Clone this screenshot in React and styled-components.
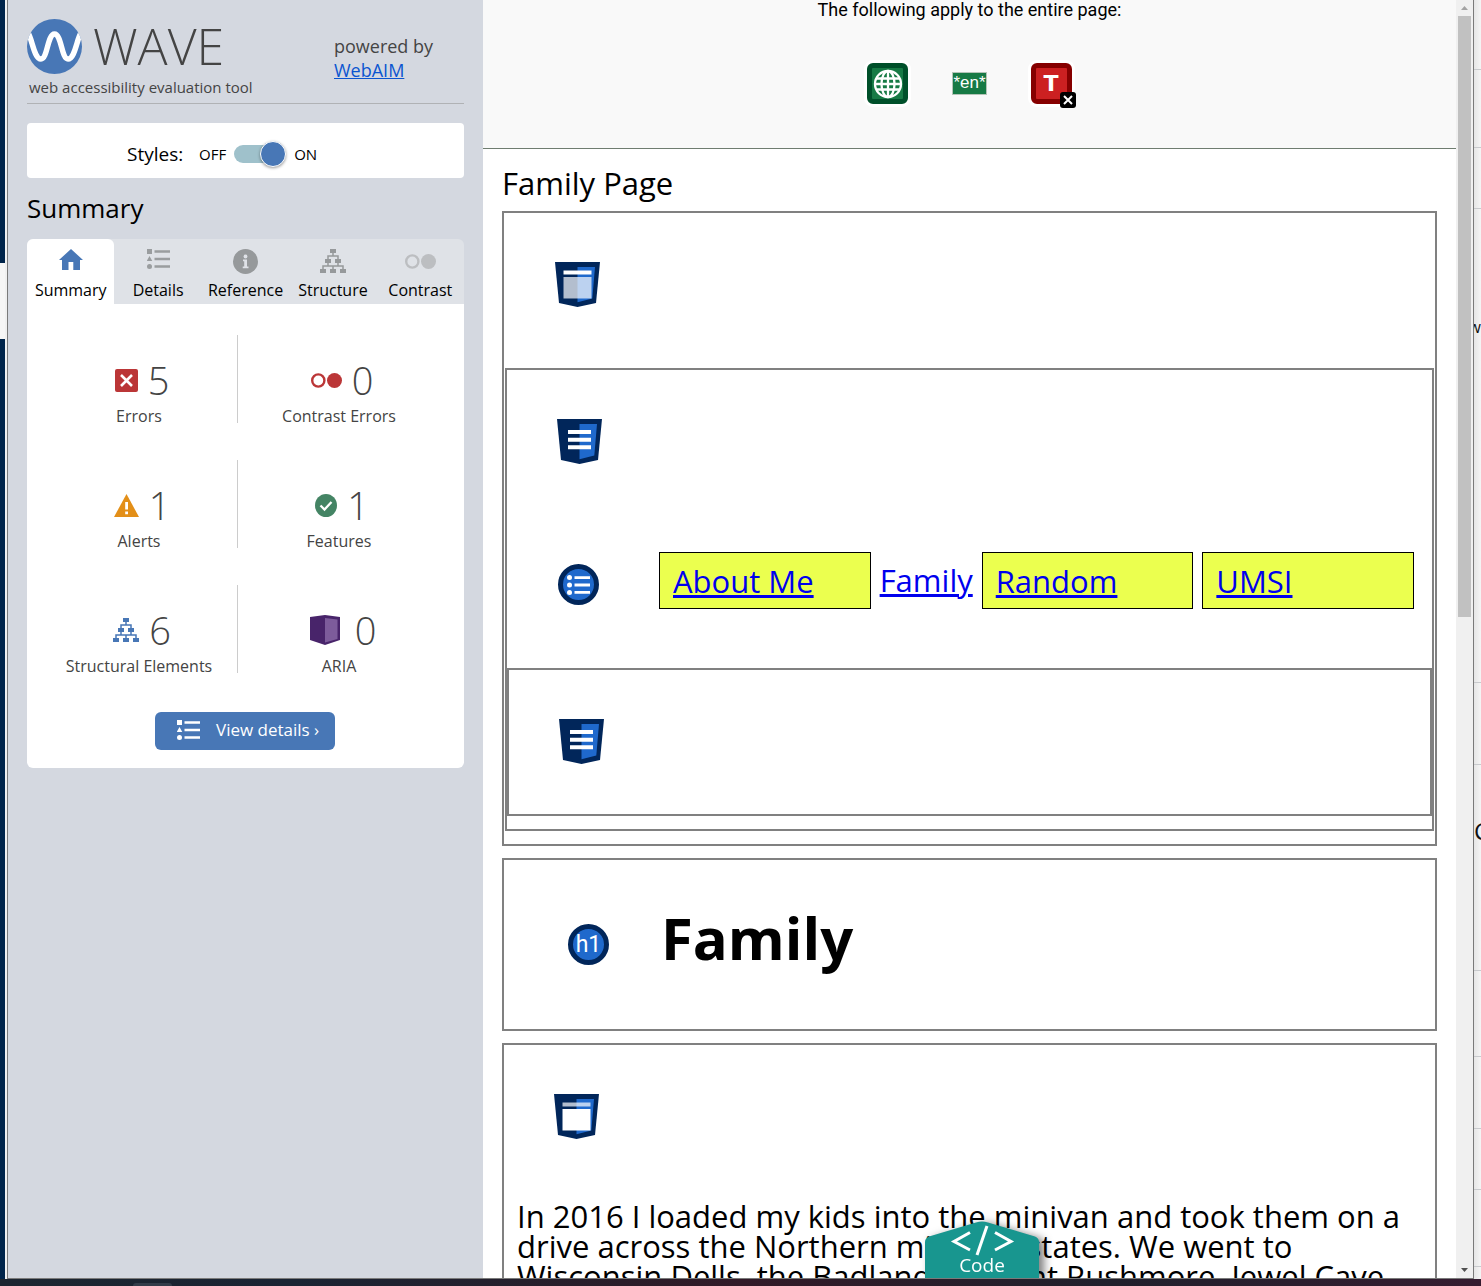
import React, { useState } from "react";
import styled, { createGlobalStyle } from "styled-components";

const uiFont = `"Open Sans", "Noto Sans", sans-serif`;
const pageFont = `"Open Sans", "Noto Sans", sans-serif`;

const GlobalStyle = createGlobalStyle`
  *, *::before, *::after { box-sizing: border-box; }
  body { margin: 0; background: #fff; }
  h1, h2, p, ul { margin: 0; padding: 0; font-weight: 400; }
  svg { display: block; flex: none; }
`;

/* ---------- desktop and window frame ---------- */

const Desktop = styled.div`
  display: flex;
  flex-direction: column;
  height: 100vh;
  overflow: hidden;
`;

const Stage = styled.div`
  flex: 1;
  min-height: 0;
  display: flex;
`;

const BackLeft = styled.div`
  flex: none;
  width: 7px;
  border-right: 2px solid #f0f0f0;
  background: linear-gradient(#00244a 263px, #f6f6f6 263px, #f6f6f6 339px, #00244a 339px);
`;

const BackRight = styled.div`
  flex: none;
  width: 7px;
  overflow: hidden;
  background: linear-gradient(90deg, #e6e6e6, #f5f5f5);
`;

const BackCell = styled.div`
  height: ${(p) => p.$height}px;
  display: flex;
  align-items: center;
  justify-content: ${(p) => (p.$end ? "flex-end" : "flex-start")};
  border-bottom: ${(p) => (p.$open ? "0" : "1px solid #c8cacd")};
  font: 400 ${(p) => p.$size || 16}px ${uiFont};
  color: #111;
`;

const Window = styled.div`
  flex: 1;
  min-width: 0;
  display: flex;
  border: 1px solid #7a7a7a;
  border-top: 0;
  background: #fff;
  overflow: hidden;
`;

const Taskbar = styled.div`
  flex: none;
  height: 7px;
  padding: 4px 0 0 133px;
  background: linear-gradient(90deg, #1c2530, #1a2433 20%, #2a1d29 42%, #321a28 50%, #20202c 75%, #351c30);
`;

const TaskItem = styled.div`
  width: 39px;
  height: 3px;
  border-radius: 3px 3px 0 0;
  background: #323c49;
`;

/* ---------- sidebar ---------- */

const Sidebar = styled.aside`
  flex: none;
  width: 475px;
  padding: 18px 19px;
  background: #d4d8e0;
  font-family: ${uiFont};
  color: #000;
`;

const Header = styled.header`
  display: grid;
  grid-template-columns: 307px 1fr;
  height: 86px;
  margin-bottom: 19px;
  border-bottom: 1px solid #b0b2b5;
  color: #444;
`;

const Brand = styled.div`
  display: flex;
  align-items: center;
  gap: 11px;
  height: 56px;
`;

const Wordmark = styled.span`
  font-size: 50px;
  line-height: 56px;
  font-weight: 300;
`;

const Tagline = styled.p`
  padding-left: 2px;
  font-size: 15px;
  line-height: 26px;
`;

const Powered = styled.p`
  padding-top: 16px;
  font-size: 18px;
  line-height: 24px;
`;

const PoweredLink = styled.a`
  display: block;
  color: #0b55d0;
`;

const StylesPanel = styled.div`
  display: flex;
  align-items: center;
  height: 55px;
  padding: 6px 0 0 100px;
  border-radius: 4px;
  background: #fff;
`;

const SwitchTitle = styled.label`
  width: 72px;
  font-size: 19px;
`;

const SwitchState = styled.span`
  font-size: 15px;
`;

const Switch = styled.input`
  appearance: none;
  position: relative;
  width: 52px;
  height: 26px;
  margin: 0 8px;
  display: flex;
  align-items: center;
  cursor: pointer;

  &::before {
    content: "";
    width: 48px;
    height: 18px;
    border-radius: 9px;
    background: #9fc1cb;
  }

  &::after {
    content: "";
    position: absolute;
    top: 0;
    left: ${(p) => (p.checked ? "26px" : "0")};
    width: 26px;
    height: 26px;
    border: 1px solid #fff;
    border-radius: 50%;
    background: #4877b6;
    box-shadow: 0 1px 3px rgba(0, 0, 0, 0.4);
  }
`;

const SectionTitle = styled.h2`
  margin: 12px 0;
  font-size: 26px;
  line-height: 37px;
`;

const Tabs = styled.div`
  display: flex;
  height: 65px;
  border-radius: 6px 6px 0 0;
  background: #dfe2e7;
`;

const Tab = styled.button`
  flex: 1 1 0;
  min-width: 0;
  display: flex;
  flex-direction: column;
  align-items: center;
  padding: 10px 0 0;
  border: 0;
  border-radius: 6px 6px 0 0;
  background: ${(p) => (p.$active ? "#fff" : "transparent")};
  color: #000;
  font: 400 16px/24px ${uiFont};
  white-space: nowrap;
  cursor: pointer;
`;

const TabIcon = styled.span`
  display: flex;
  align-items: ${(p) => (p.$middle ? "center" : "flex-start")};
  height: 25px;
  margin-bottom: 4px;
  color: ${(p) => p.$color};
`;

const SummaryPanel = styled.section`
  padding: 31px 24px 18px 11px;
  border-radius: 0 0 6px 6px;
  background: #fff;
  color: #444;
`;

const StatGrid = styled.div`
  display: grid;
  grid-template-columns: 200fr 202fr;
  row-gap: 37px;
`;

const Stat = styled.div`
  height: 88px;
  display: flex;
  flex-direction: column;
  align-items: center;
  padding-top: 25px;

  &:nth-child(odd) {
    padding-left: 3px;
    border-right: 1px solid #ccc;
  }
`;

const StatTop = styled.div`
  display: flex;
  align-items: center;
  gap: 10px;
  padding-left: 6px;
  height: 40px;
`;

const StatCount = styled.span`
  font-size: 38px;
  line-height: 40px;
  font-weight: 350;
`;

const StatLabel = styled.span`
  font-size: 16px;
  line-height: 32px;
`;

const ViewDetails = styled.button`
  display: flex;
  align-items: center;
  gap: 16px;
  height: 38px;
  margin: 39px 0 0 117px;
  padding: 0 16px 2px 22px;
  border: 0;
  border-radius: 6px;
  background: #4877b6;
  color: #fff;
  font: 400 17px/24px ${uiFont};
  cursor: pointer;
`;

/* ---------- evaluated page ---------- */

const Viewer = styled.div`
  position: relative;
  flex: 1;
  min-width: 0;
  display: flex;
`;

const Page = styled.main`
  flex: 1;
  min-width: 0;
  height: 100%;
  overflow: hidden;
  font-family: ${pageFont};
  color: #000;
`;

const PageNotice = styled.div`
  display: flex;
  flex-direction: column;
  align-items: center;
  gap: 44px;
  height: 149px;
  border-bottom: 1px solid #6f7d70;
  background: #f9f9f9;
`;

const NoticeText = styled.p`
  font: 400 18px/19px Roboto, "Liberation Sans", sans-serif;
`;

const NoticeIcons = styled.div`
  display: flex;
  align-items: center;
  gap: 44px;
`;

const NoticeBadge = styled.span`
  position: relative;
  display: flex;
  align-items: center;
  justify-content: center;
  width: 41px;
  height: 41px;
  border: 5px solid ${(p) => p.$edge};
  border-radius: 6px;
  background: ${(p) => p.$fill};
  box-shadow: 0 0 0 3px #fff;
  color: #fff;
  font: 700 22px/24px "DejaVu Sans", sans-serif;
`;

const BadgeCorner = styled.span`
  position: absolute;
  right: -9px;
  bottom: -9px;
`;

const LangTag = styled.span`
  height: 23px;
  border: 1px solid #b5c4b8;
  background: #177a45;
  color: #fff;
  font: 400 17px/19px "Liberation Sans", Arial, sans-serif;
`;

const PageBody = styled.div`
  padding: 14px 19px 0;
`;

const PageTitle = styled.p`
  font-size: 31px;
  line-height: 40px;
  margin-bottom: 8px;
`;

const Outline = styled.section`
  margin-bottom: ${(p) => (p.$nested ? 0 : 12)}px;
  padding: ${(p) => p.$pad || "0"};
  border: 2px solid #808080;
`;

const Marker = styled.div`
  padding: 49px 50px ${(p) => (p.$short ? 50 : 61)}px;
`;

const NavRow = styled.nav`
  display: flex;
  align-items: flex-start;
  padding: 27px 18px 59px 51px;
`;

const RoundMarker = styled.span`
  flex: none;
  display: flex;
  align-items: center;
  justify-content: center;
  width: 41px;
  height: 41px;
  margin: 12px 60px 0 0;
  border: 5px solid #01265a;
  border-radius: 50%;
  background: #1f69cc;
  color: #fff;
  font: 400 23px/30px Roboto, sans-serif;
`;

const NavList = styled.ul`
  flex: 1;
  display: flex;
  gap: 9px;
  list-style: none;
`;

const NavItem = styled.li`
  flex: ${(p) => (p.$boxed ? "1 1 0" : "none")};
  height: 57px;
  padding: ${(p) => (p.$boxed ? "0 13px" : "0")};
  border: ${(p) => (p.$boxed ? "1px solid #000" : "0")};
  background: ${(p) => (p.$boxed ? "#ebff4f" : "transparent")};
  font-size: 31px;
  line-height: 57px;
`;

const NavLink = styled.a`
  color: #0000ee;
  text-decoration-thickness: 3px;
`;

const HeadingRow = styled.div`
  display: flex;
  align-items: flex-start;
  height: 169px;
  padding: 42px 64px 0;
`;

const HeadingMark = styled(RoundMarker)`
  margin: 22px 52px 0 0;
`;

const Heading = styled.h1`
  font-size: 58px;
  line-height: 72px;
  font-weight: 700;
`;

const Story = styled.p`
  padding: 1px 13px 0;
  font-size: 31px;
  line-height: 30px;
  white-space: nowrap;
`;

const Scrollbar = styled.div`
  flex: none;
  width: 17px;
  display: flex;
  flex-direction: column;
  align-items: center;
  justify-content: space-between;
  background: #f0f0f0;
`;

const ScrollArrow = styled.div`
  height: 16px;
  display: flex;
  align-items: center;
`;

const ScrollTrack = styled.div`
  flex: 1;
  width: 13px;
  background: linear-gradient(#c1c1c1 601px, transparent 601px);
`;

const CodeButton = styled.button`
  position: absolute;
  bottom: 0;
  left: calc(50% - 53px);
  display: grid;
  width: 114px;
  height: 57px;
  padding: 0;
  border: 0;
  background: none;
  color: #fff;
  font: 400 19px/26px ${uiFont};
  filter: drop-shadow(5px 2px 4px rgba(0, 0, 0, 0.5));
  cursor: pointer;

  > * {
    grid-area: 1 / 1;
  }
`;

const CodeLabel = styled.span`
  align-self: end;
  justify-self: center;
`;

/* ---------- drawings ---------- */

const WaveLogo = () => (
  <svg width="55" height="55" viewBox="0 0 55 55" aria-hidden="true">
    <defs>
      <clipPath id="disc"><circle cx="27.5" cy="27.5" r="27.5" /></clipPath>
    </defs>
    <circle cx="27.5" cy="27.5" r="27.5" fill="#4877b6" />
    <path
      clipPath="url(#disc)"
      d="M1 14 C5 19 7 40 14 40 C20.500 40 20.500 15 27.500 15 C34.500 15 34.500 40 41 40 C48 40 50 19 54 14"
      fill="none" stroke="#fff" strokeWidth="5.500"
    />
  </svg>
);

const HomeIcon = () => (
  <svg width="24" height="21" viewBox="0 0 24 21" fill="currentColor" aria-hidden="true">
    <path d="M12 0 L24 11 H21 V21 H14.300 V13 H9.500 V21 H3 V11 H0 Z" />
  </svg>
);

const ListIcon = () => (
  <svg width="23" height="20" viewBox="0 0 23 20" fill="currentColor" aria-hidden="true">
    <path d="M0 0h5v5H0z M2.500 7 L5.300 12 H-0.300 Z M7.500 1.300h15.500v2.500H7.500z M7.500 8.700h15.500v2.500H7.500z M7.500 16.200h15.500v2.500H7.500z" />
    <circle cx="2.500" cy="17.500" r="2.500" />
  </svg>
);

const InfoIcon = () => (
  <svg width="25" height="25" viewBox="0 0 25 25" aria-hidden="true">
    <circle cx="12.500" cy="12.500" r="12.500" fill="currentColor" />
    <circle cx="12.500" cy="7.500" r="1.900" fill="#dfe2e7" />
    <path d="M10 10.500h4v7h1.500v1.800H9.700v-1.800h1.500v-5.200H10z" fill="#dfe2e7" />
  </svg>
);

const TreeIcon = () => (
  <svg width="26" height="24" viewBox="0 0 26 24" aria-hidden="true">
    <path d="M10 0h6v4h-6z M5 10h6v4H5z M15 10h6v4h-6z M0 20h6v4H0z M10 20h6v4h-6z M20 20h6v4h-6z" fill="currentColor" />
    <path d="M13 4v3 M8 10V7h10v3 M8 14v3 M18 14v3 M3 20v-3h20v3 M13 17v3" fill="none" stroke="currentColor" strokeWidth="1.500" />
  </svg>
);

const ContrastIcon = () => (
  <svg width="31" height="15" viewBox="0 0 31 15" aria-hidden="true">
    <circle cx="7.300" cy="7.500" r="6.100" fill="none" stroke="currentColor" strokeWidth="2.400" />
    <circle cx="23.500" cy="7.500" r="7.500" fill="currentColor" />
  </svg>
);

const ErrorIcon = () => (
  <svg width="23" height="23" viewBox="0 0 23 23" aria-hidden="true">
    <rect width="23" height="23" rx="2" fill="#bb3637" />
    <path d="M6 6l11 11M17 6L6 17" stroke="#fff" strokeWidth="2.600" />
  </svg>
);

const AlertIcon = () => (
  <svg width="25" height="23" viewBox="0 0 25 23" aria-hidden="true">
    <path d="M12.500 0 L25 23 H0 Z" fill="#e38f18" />
    <path d="M11.200 8h2.800v7.500h-2.800z M11.200 17.500h2.800v2.800h-2.800z" fill="#fff" />
  </svg>
);

const FeatureIcon = () => (
  <svg width="22" height="23" viewBox="0 0 22 23" aria-hidden="true">
    <ellipse cx="11" cy="11.500" rx="11" ry="11.500" fill="#448464" />
    <path d="M5.500 11.500l4 4 7-7.500" fill="none" stroke="#fff" strokeWidth="2.300" />
  </svg>
);

const AriaIcon = () => (
  <svg width="37" height="30" viewBox="0 0 37 30" aria-hidden="true">
    <path d="M2 2 L17 0 L32 2 V25 L17 30 L2 25 Z" fill="#48246a" />
    <path d="M17 3 L29.500 4.500 V24 L17 27.500 Z" fill="#7d5c9b" />
  </svg>
);

const GlobeIcon = () => (
  <svg width="30" height="30" viewBox="0 0 30 30" fill="none" stroke="#fff" strokeWidth="2.300" aria-hidden="true">
    <circle cx="15" cy="15" r="13" />
    <ellipse cx="15" cy="15" rx="6.500" ry="13" />
    <path d="M15 2v26 M2 15h26 M4 9.500h22 M4 20.500h22" />
  </svg>
);

const CrossCorner = () => (
  <svg width="16" height="16" viewBox="0 0 16 16" aria-hidden="true">
    <rect width="16" height="16" rx="3" fill="#000" />
    <path d="M4 4l8 8M12 4l-8 8" stroke="#fff" strokeWidth="2" />
  </svg>
);

const Shield = ({ kind }) => (
  <svg width="45" height="45" viewBox="0 0 45 45" role="img" aria-label={kind}>
    <path d="M0 0H45L41 41L22.500 45L4 41Z" fill="#01265a" />
    <path d="M22.500 5H40L37.300 36.500L22.500 40.300Z" fill="#1f69cc" />
    {kind === "navigation" ? (
      <path d="M11 11h23v4H11z M11 18.700h23v4H11z M11 26.300h23v4H11z" fill="#fff" />
    ) : (
      <g fill="#fff">
        <path d="M8.500 8.500h28v4h-28z" opacity={kind === "main" ? 0.7 : 1} />
        <path d="M8.500 15h28v21.500h-28z" opacity={kind === "main" ? 1 : 0.7} />
      </g>
    )}
  </svg>
);

const BulletList = () => (
  <svg width="25" height="20" viewBox="0 0 25 20" fill="#fff" aria-hidden="true">
    <circle cx="3.500" cy="2.600" r="2.500" />
    <circle cx="3.500" cy="10" r="2.500" />
    <circle cx="3.500" cy="17.400" r="2.500" />
    <path d="M8.500 1.300h15.500v2.800H8.500z M8.500 8.600h15.500v2.800H8.500z M8.500 16h15.500v2.800H8.500z" />
  </svg>
);

const CodeShape = () => (
  <svg width="114" height="57" viewBox="0 0 114 57" aria-hidden="true">
    <path d="M0 57V21Q0 17 4 15.500L51 1.500Q57 -0.500 63 1.500L110 15.500Q114 17 114 21V57Z" fill="#18968f" />
    <path d="M45 11.500L29 20.500L45 29 M70 11.500L86 20.500L70 29" fill="none" stroke="#fff" strokeWidth="3" />
    <path d="M62 5L52 34" stroke="#fff" strokeWidth="3" />
  </svg>
);

const ArrowMark = ({ down }) => (
  <svg width="7" height="4" viewBox="0 0 7 4" aria-hidden="true">
    <path d={down ? "M0 0H7L3.500 4Z" : "M0 4H7L3.500 0Z"} fill={down ? "#505050" : "#a3a3a3"} />
  </svg>
);

/* ---------- content ---------- */

const tabs = [
  { name: "Summary", Icon: HomeIcon, color: "#9a9d9f" },
  { name: "Details", Icon: ListIcon, color: "#9a9d9f" },
  { name: "Reference", Icon: InfoIcon, color: "#96999b" },
  { name: "Structure", Icon: TreeIcon, color: "#96999b" },
  { name: "Contrast", Icon: ContrastIcon, color: "#bcbec1", middle: true },
];

const stats = [
  { label: "Errors", count: 5, Icon: ErrorIcon },
  { label: "Contrast Errors", count: 0, Icon: ContrastIcon, color: "#bb3637" },
  { label: "Alerts", count: 1, Icon: AlertIcon },
  { label: "Features", count: 1, Icon: FeatureIcon },
  { label: "Structural Elements", count: 6, Icon: TreeIcon, color: "#4877b6" },
  { label: "ARIA", count: 0, Icon: AriaIcon },
];

const StatIcon = styled.span`
  color: ${(p) => p.$color || "inherit"};
`;

const links = [
  { text: "About Me", boxed: true },
  { text: "Family", boxed: false },
  { text: "Random", boxed: true },
  { text: "UMSI", boxed: true },
];

export default function App() {
  const [stylesOn, setStylesOn] = useState(true);
  const [active, setActive] = useState("Summary");

  return (
    <Desktop>
      <GlobalStyle />
      <Stage>
        <BackLeft />
        <Window>
          <Sidebar>
            <Header>
              <div>
                <Brand>
                  <WaveLogo />
                  <Wordmark>WAVE</Wordmark>
                </Brand>
                <Tagline>web accessibility evaluation tool</Tagline>
              </div>
              <Powered>
                powered by <PoweredLink href="#webaim">WebAIM</PoweredLink>
              </Powered>
            </Header>

            <StylesPanel>
              <SwitchTitle htmlFor="styles">Styles:</SwitchTitle>
              <SwitchState>OFF</SwitchState>
              <Switch
                id="styles"
                type="checkbox"
                checked={stylesOn}
                onChange={(e) => setStylesOn(e.target.checked)}
              />
              <SwitchState>ON</SwitchState>
            </StylesPanel>

            <SectionTitle>Summary</SectionTitle>

            <Tabs role="tablist">
              {tabs.map(({ name, Icon, color, middle }) => (
                <Tab
                  key={name}
                  role="tab"
                  aria-selected={active === name}
                  $active={active === name}
                  onClick={() => setActive(name)}
                >
                  <TabIcon $middle={middle} $color={active === name ? "#4877b6" : color}>
                    <Icon />
                  </TabIcon>
                  {name}
                </Tab>
              ))}
            </Tabs>

            <SummaryPanel>
              <StatGrid>
                {stats.map(({ label, count, Icon, color }) => (
                  <Stat key={label}>
                    <StatTop>
                      <StatIcon $color={color}><Icon /></StatIcon>
                      <StatCount>{count}</StatCount>
                    </StatTop>
                    <StatLabel>{label}</StatLabel>
                  </Stat>
                ))}
              </StatGrid>
              <ViewDetails>
                <ListIcon />
                View details ›
              </ViewDetails>
            </SummaryPanel>
          </Sidebar>

          <Viewer>
            <Page>
              <PageNotice>
                <NoticeText>The following apply to the entire page:</NoticeText>
                <NoticeIcons>
                  <NoticeBadge $edge="#00502a" $fill="#177a45"><GlobeIcon /></NoticeBadge>
                  <LangTag>*en*</LangTag>
                  <NoticeBadge $edge="#860000" $fill="#cc2021">
                    T
                    <BadgeCorner><CrossCorner /></BadgeCorner>
                  </NoticeBadge>
                </NoticeIcons>
              </PageNotice>

              <PageBody>
                <PageTitle>Family Page</PageTitle>

                <Outline $pad="0 1px 13px">
                  <Marker><Shield kind="header" /></Marker>
                  <Outline $nested $pad="0 0 13px">
                    <Marker><Shield kind="navigation" /></Marker>
                    <NavRow>
                      <RoundMarker><BulletList /></RoundMarker>
                      <NavList>
                        {links.map(({ text, boxed }) => (
                          <NavItem key={text} $boxed={boxed}>
                            <NavLink href={"#" + text}>{text}</NavLink>
                          </NavItem>
                        ))}
                      </NavList>
                    </NavRow>
                    <Outline $nested>
                      <Marker $short><Shield kind="navigation" /></Marker>
                    </Outline>
                  </Outline>
                </Outline>

                <Outline>
                  <HeadingRow>
                    <HeadingMark>h1</HeadingMark>
                    <Heading>Family</Heading>
                  </HeadingRow>
                </Outline>

                <Outline>
                  <Marker><Shield kind="main" /></Marker>
                  <Story>
                    In 2016 I loaded my kids into the minivan and took them on a
                    <br />
                    drive across the Northern midwest states. We went to
                    <br />
                    Wisconsin Dells, the Badlands, Mount Rushmore, Jewel Cave,
                  </Story>
                </Outline>
              </PageBody>
            </Page>

            <Scrollbar aria-hidden="true">
              <ScrollArrow><ArrowMark /></ScrollArrow>
              <ScrollTrack />
              <ScrollArrow><ArrowMark down /></ScrollArrow>
            </Scrollbar>

            <CodeButton>
              <CodeShape />
              <CodeLabel>Code</CodeLabel>
            </CodeButton>
          </Viewer>
        </Window>
        <BackRight>
          <BackCell $height={70} />
          <BackCell $height={78} />
          <BackCell $height={61} />
          <BackCell $height={236} $end $open>w</BackCell>
          <BackCell $height={238} />
          <BackCell $height={82} />
          <BackCell $height={130} $size={24} $open>C</BackCell>
          <BackCell $height={76} />
          <BackCell $height={86} />
          <BackCell $height={72} />
          <BackCell $height={61} />
          <BackCell $height={77} />
        </BackRight>
      </Stage>
      <Taskbar><TaskItem /></Taskbar>
    </Desktop>
  );
}
